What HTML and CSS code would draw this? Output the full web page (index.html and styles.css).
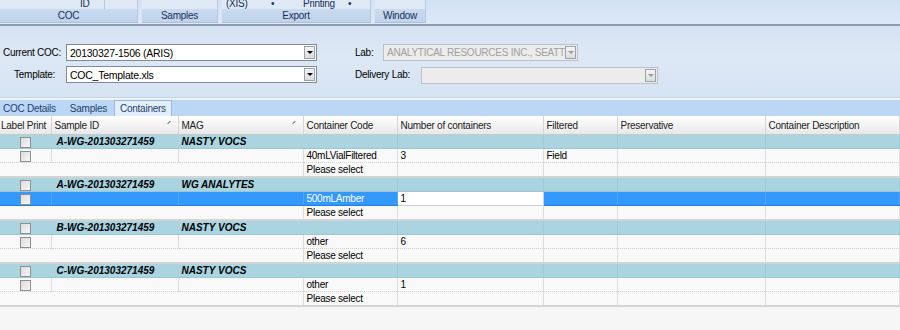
FILE: index.html
```html
<!DOCTYPE html>
<html lang="en">
<head>
    <meta charset="UTF-8">
    <title>COC Containers</title>
    <link rel="stylesheet" href="styles.css">
</head>
<body>

    <div class="ribbon">
        <div class="group g-coc">
            <div class="group-top"><span class="cut cut-id">ID</span><span class="sep-v"></span></div>
            <div class="group-label">COC</div>
        </div>
        <div class="group g-samples">
            <div class="group-top"></div>
            <div class="group-label">Samples</div>
        </div>
        <div class="group g-export">
            <div class="group-top"><span class="cut cut-xls">(XIS)</span><span class="cut dot1">&bull;</span><span class="cut cut-print">Printing</span><span class="cut dot2">&bull;</span></div>
            <div class="group-label">Export</div>
        </div>
        <div class="group g-window">
            <div class="group-top"></div>
            <div class="group-label">Window</div>
        </div>
    </div>

    <div class="form">
        <div class="form-col">
            <div class="field">
                <label class="lbl lbl-coc">Current COC:</label>
                <div class="combo w250"><span>20130327-1506 (ARIS)</span><i class="arrow"></i></div>
            </div>
            <div class="field">
                <label class="lbl lbl-tpl">Template:</label>
                <div class="combo w250"><span>COC_Template.xls</span><i class="arrow"></i></div>
            </div>
        </div>
        <div class="form-col right">
            <div class="field">
                <label class="lbl lbl-lab">Lab:</label>
                <div class="combo disabled w195"><span>ANALYTICAL RESOURCES INC., SEATT</span><i class="arrow"></i></div>
            </div>
            <div class="field">
                <label class="lbl lbl-del">Delivery Lab:</label>
                <div class="combo disabled w237"><span></span><i class="arrow"></i></div>
            </div>
        </div>
    </div>

    <div class="tabs">
        <span class="tab">COC Details</span>
        <span class="tab">Samples</span>
        <span class="tab active">Containers</span>
    </div>

    <table class="grid">
        <colgroup>
            <col style="width:51px"><col style="width:127px"><col style="width:125px"><col style="width:94px">
            <col style="width:146px"><col style="width:74px"><col style="width:148px"><col>
        </colgroup>
        <thead>
            <tr>
                <th>Label Print</th>
                <th class="sort">Sample ID</th>
                <th class="sort">MAG</th>
                <th>Container Code</th>
                <th>Number of containers</th>
                <th>Filtered</th>
                <th>Preservative</th>
                <th>Container Description</th>
            </tr>
        </thead>
        <tbody>
            <tr class="grp"><td><i class="chk"></i></td><td>A-WG-201303271459</td><td>NASTY VOCS</td><td></td><td></td><td></td><td></td><td></td></tr>
            <tr class="item"><td><i class="chk"></i></td><td></td><td></td><td>40mLVialFiltered</td><td>3</td><td>Field</td><td></td><td></td></tr>
            <tr class="new"><td colspan="3"></td><td>Please select</td><td></td><td></td><td></td><td></td></tr>

            <tr class="grp"><td><i class="chk"></i></td><td>A-WG-201303271459</td><td>WG ANALYTES</td><td></td><td></td><td></td><td></td><td></td></tr>
            <tr class="item selected"><td><i class="chk"></i></td><td></td><td></td><td>500mLAmber</td><td class="editing">1</td><td></td><td></td><td></td></tr>
            <tr class="new"><td colspan="3"></td><td>Please select</td><td></td><td></td><td></td><td></td></tr>

            <tr class="grp"><td><i class="chk"></i></td><td>B-WG-201303271459</td><td>NASTY VOCS</td><td></td><td></td><td></td><td></td><td></td></tr>
            <tr class="item"><td><i class="chk"></i></td><td></td><td></td><td>other</td><td>6</td><td></td><td></td><td></td></tr>
            <tr class="new"><td colspan="3"></td><td>Please select</td><td></td><td></td><td></td><td></td></tr>

            <tr class="grp"><td><i class="chk"></i></td><td>C-WG-201303271459</td><td>NASTY VOCS</td><td></td><td></td><td></td><td></td><td></td></tr>
            <tr class="item"><td><i class="chk"></i></td><td></td><td></td><td>other</td><td>1</td><td></td><td></td><td></td></tr>
            <tr class="new"><td colspan="3"></td><td>Please select</td><td></td><td></td><td></td><td></td></tr>
        </tbody>
    </table>

</body>
</html>
```

FILE: styles.css
```css
body {
    margin: 0;
    width: 900px;
    height: 330px;
    overflow: hidden;
    background: #f6f6f6;
    font-family: "Liberation Sans", Arial, sans-serif;
    font-size: 10px;
    letter-spacing: -0.25px;
    color: #000;
}

/* ribbon */
.ribbon {
    display: flex;
    height: 24px;
    background: linear-gradient(#d2e1f3, #dde9f8);
    border-bottom: 2px solid #8d9db1;
    box-shadow: 0 1px 0 #eef4fb;
}
.group {
    display: flex;
    flex-direction: column;
    height: 22px;
    margin-right: 4px;
    border-right: 1px solid #b6c8de;
    border-bottom: 1px solid #aebfd6;
    background: #d9e5f4;
}
.g-coc { width: 137px; }
.g-samples { width: 75px; }
.g-export { width: 148px; }
.g-window { width: 50px; }
.group-top {
    position: relative;
    height: 9px;
    overflow: hidden;
    background: #dfe9f6;
}
.cut {
    position: absolute;
    top: -2px;
    line-height: 11px;
    color: #15305a;
}
.cut-id { left: 80px; }
.sep-v {
    position: absolute;
    left: 104px;
    top: 0;
    width: 1px;
    height: 9px;
    background: #b8c9de;
}
.cut-xls { left: 4px; }
.dot1 { left: 49px; }
.cut-print { left: 81px; }
.dot2 { left: 126px; }
.group-label {
    height: 13px;
    line-height: 13px;
    text-align: center;
    color: #15305a;
    background: linear-gradient(#c9daef, #c0d3ea);
}

/* form */
.form {
    display: flex;
    height: 72px;
    padding-top: 18px;
    box-sizing: border-box;
    background: linear-gradient(#d5e2f1, #dde8f5 40%, #d6e3f3);
    border-bottom: 1px solid #c3d3e6;
}
.form-col {
    display: flex;
    flex-direction: column;
    gap: 5px;
}
.form-col.right {
    margin-left: 38px;
}
.field {
    display: flex;
    align-items: center;
    height: 17px;
}
.lbl {
    display: inline-block;
    white-space: nowrap;
    color: #000;
}
.lbl-coc { width: 63px; padding-left: 3px; }
.lbl-tpl { width: 52px; padding-left: 14px; }
.lbl-lab { width: 28px; }
.lbl-del { width: 66px; }
.combo {
    display: flex;
    align-items: center;
    justify-content: space-between;
    height: 17px;
    box-sizing: border-box;
    border: 1px solid #7f8a99;
    background: #fff;
    padding-left: 3px;
    font-size: 10.5px;
}
.combo span {
    white-space: nowrap;
    overflow: hidden;
}
.w250 { width: 251px; }
.w195 { width: 195px; margin-top: -1px; font-size: 10px; }
.w237 { width: 237px; margin-top: 2px; }
.combo.disabled {
    border-color: #b9c0c8;
    background: #ececec;
    color: #a0a0a0;
}
.arrow {
    position: relative;
    flex: none;
    width: 11px;
    height: 13px;
    margin-right: 1px;
    border: 1px solid #9aa3ad;
    box-sizing: border-box;
    background: linear-gradient(#f4f4f4, #dcdcdc);
}
.arrow::after {
    content: "";
    position: absolute;
    left: 2px;
    top: 4px;
    border-left: 3px solid transparent;
    border-right: 3px solid transparent;
    border-top: 3px solid #000;
}
.disabled .arrow::after {
    border-top-color: #9a9a9a;
}

/* tabs */
.tabs {
    display: flex;
    align-items: flex-end;
    height: 16px;
    margin-top: 1px;
    background: #bcd6f6;
    border-top: 1px solid #e6eef8;
}
.tab {
    height: 15px;
    line-height: 15px;
    padding: 0 3px;
    color: #1d3f6e;
}
.tab:first-child { margin-right: 8px; }
.tab:nth-child(2) { margin-right: 4px; }
.tab.active {
    padding: 0 5px;
    background: #e3eefb;
    border: 1px solid #9eb8d8;
    border-bottom: none;
}

/* grid */
.grid {
    width: 900px;
    border-collapse: collapse;
    table-layout: fixed;
}
.grid th {
    position: relative;
    height: 18px;
    padding: 0 3px;
    text-align: left;
    font-weight: normal;
    white-space: nowrap;
    overflow: hidden;
    background: linear-gradient(#ffffff, #f1f1f1 60%, #e7e7e7);
    border-right: 1px solid #d6d6d6;
    border-bottom: 1px solid #c9c9c9;
    color: #222;
}
.grid th:first-child { padding: 0 0 0 1px; }
.grid th.sort::after {
    content: "";
    position: absolute;
    right: 7px;
    top: 6px;
    width: 4px;
    height: 1px;
    background: #777;
    transform: rotate(-45deg);
}
.grid td {
    height: 14px;
    padding: 0 3px;
    white-space: nowrap;
    overflow: hidden;
    border-right: 1px solid #dedede;
    line-height: 13px;
}
.grid td:first-child {
    text-align: center;
    padding: 0;
}
.grp td {
    background: #a9d4e0;
    border-right-color: #a9d4e0;
    border-bottom: 1px solid #9cc6d4;
    font-weight: bold;
    font-style: italic;
    letter-spacing: 0;
    height: 13px;
}
.grp td:nth-child(2) { padding-left: 5px; }
.grp td:nth-child(n+4) { border-right-color: #9fcbd8; }
.item td {
    background: #f9f9f9;
    border-bottom: 1px dotted #d2d2d2;
    height: 13px;
}
.new td {
    background: #f9f9f9;
    border-bottom: 2px solid #d4d4d4;
    height: 12px;
}
.new td:first-child {
    text-align: left;
}
.selected td {
    background: #3399ff;
    color: #fff;
    border-right-color: #4da6ff;
    border-bottom: 1px solid #1f7fe0;
}
.selected td.editing {
    background: #fff;
    color: #000;
    border: 1px solid #d0d0d0;
}
.chk {
    display: inline-block;
    width: 9px;
    height: 9px;
    margin-top: 2px;
    vertical-align: top;
    border: 1px solid #8f8f8f;
    background: linear-gradient(135deg, #dcdcdc, #f6f6f6);
}
```
